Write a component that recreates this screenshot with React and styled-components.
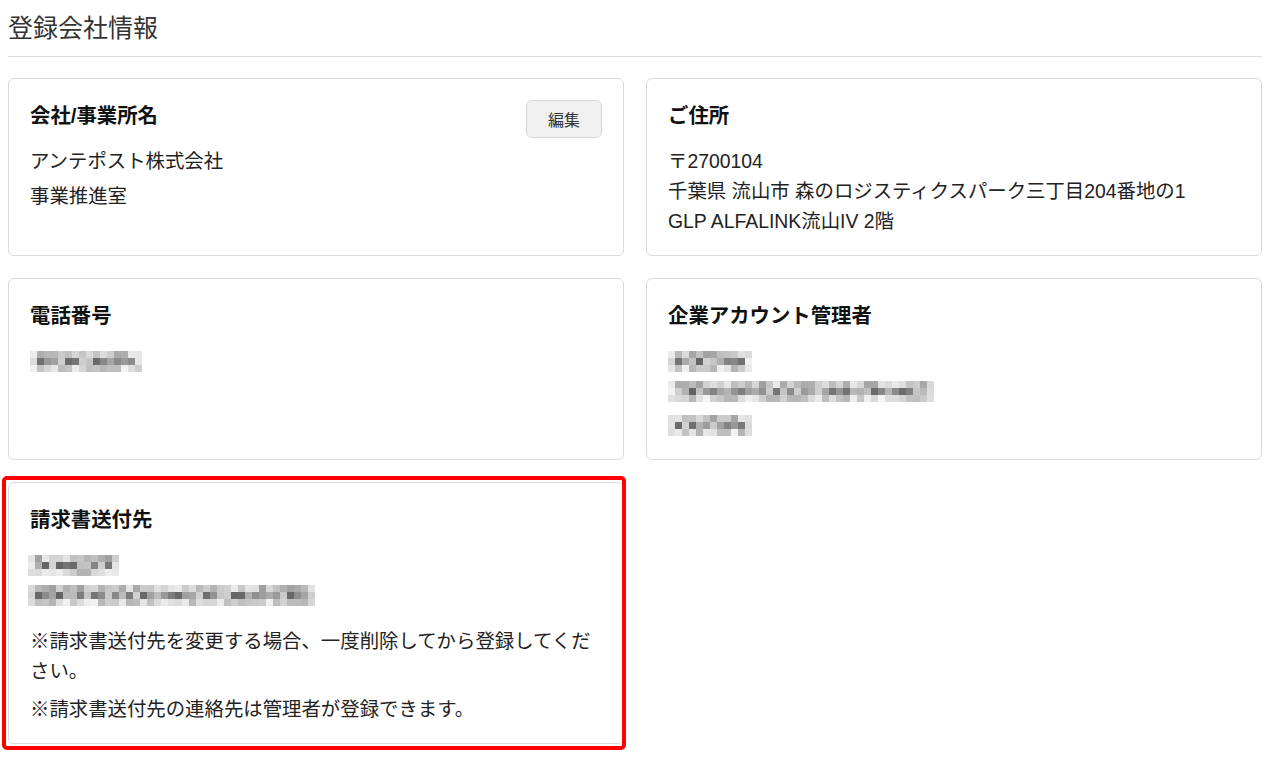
import styled, { createGlobalStyle } from "styled-components";

const GlobalStyle = createGlobalStyle`
    body {
        margin: 0;
        background: #fff;
        color: #222;
        font-family: "Liberation Sans", "Noto Sans CJK JP", sans-serif;
    }
`;

const Page = styled.div`
    min-height: 759px;
    box-sizing: border-box;
    padding: 10px 18px 20px 8px;
`;

const PageTitle = styled.h1`
    margin: 0;
    padding-bottom: 10px;
    border-bottom: 1px solid #dcdcdc;
    font-size: 25px;
    line-height: 36px;
    font-weight: normal;
    color: #333;
`;

const CardGrid = styled.div`
    display: grid;
    grid-template-columns: 1fr 1fr;
    gap: 22px;
    margin-top: 21px;
    align-items: stretch;
`;

const Card = styled.section`
    position: relative;
    border: 1px solid #dadada;
    border-radius: 6px;
    padding: 23px 21px 19px;
    background: #fff;
`;

const Highlight = styled.span`
    position: absolute;
    top: -7px;
    left: -7px;
    right: -3px;
    bottom: -7px;
    border: 4px solid #ff0000;
    border-radius: 5px;
    pointer-events: none;
`;

const CardHeader = styled.div`
    display: flex;
    justify-content: space-between;
    align-items: flex-start;
    margin-bottom: 16px;
`;

const CardTitle = styled.h2`
    margin: 0;
    font-size: 20.4px;
    line-height: 28px;
    font-weight: bold;
    color: #111;
`;

const EditButton = styled.button`
    width: 76px;
    height: 38px;
    margin: -2px 0 -8px;
    border: 1px solid #d8d8d8;
    border-radius: 6px;
    background: #f0f0f0;
    font-family: inherit;
    font-size: 16px;
    color: #333;
    cursor: pointer;
`;

const Line = styled.p`
    margin: ${(props) => (props.$gap ? `${props.$gap}px` : "0")} 0 0;
    font-size: 19.4px;
    line-height: 30px;
`;

const MosaicLine = styled.div`
    display: flex;
    align-items: center;
    height: 30px;
    margin-top: ${(props) => (props.$gap ? `${props.$gap}px` : "0")};
    margin-left: ${(props) => (props.$shift ? `${props.$shift}px` : "0")};
`;

const MosaicGrid = styled.div`
    display: grid;
    grid-template-columns: repeat(${(props) => props.$cols}, 7px);
    grid-template-rows: repeat(3, 7px);
`;

const Notes = styled.div`
    margin-top: 16px;
    display: flex;
    flex-direction: column;
    gap: 8px;
`;

const rand = (seed, i) => {
    const x = Math.sin(seed * 97.13 + i * 12.9898) * 43758.5453;
    return x - Math.floor(x);
};

// pixelated stand-in for the blurred personal data
const Mosaic = ({ width, seed, gap, shift }) => {
    const cols = Math.round(width / 7);
    const cells = [];
    for (let r = 0; r < 3; r++) {
        for (let c = 0; c < cols; c++) {
            const v = rand(seed, r * 50 + c);
            const edge = c === 0 || c === cols - 1;
            let light;
            if (r === 1) light = 0.38 + v * 0.45;
            else if (r === 0) light = 0.62 + v * 0.3;
            else light = 0.7 + v * 0.26;
            if (edge) light = 0.8 + v * 0.15;
            const g = Math.round(255 * light);
            cells.push(
                <span
                    key={`${r}-${c}`}
                    style={{ background: `rgb(${g}, ${g}, ${g})` }}
                />
            );
        }
    }
    return (
        <MosaicLine $gap={gap} $shift={shift}>
            <MosaicGrid $cols={cols}>{cells}</MosaicGrid>
        </MosaicLine>
    );
};

const App = () => {
    return (
        <Page>
            <GlobalStyle />
            <PageTitle>登録会社情報</PageTitle>

            <CardGrid>
                <Card>
                    <CardHeader>
                        <CardTitle>会社/事業所名</CardTitle>
                        <EditButton type="button">編集</EditButton>
                    </CardHeader>
                    <Line>アンテポスト株式会社</Line>
                    <Line $gap={5}>事業推進室</Line>
                </Card>

                <Card>
                    <CardHeader>
                        <CardTitle>ご住所</CardTitle>
                    </CardHeader>
                    <Line>〒2700104</Line>
                    <Line>千葉県 流山市 森のロジスティクスパーク三丁目204番地の1</Line>
                    <Line>GLP ALFALINK流山IV 2階</Line>
                </Card>

                <Card>
                    <CardHeader>
                        <CardTitle>電話番号</CardTitle>
                    </CardHeader>
                    <Mosaic width={112} seed={3} />
                </Card>

                <Card>
                    <CardHeader>
                        <CardTitle>企業アカウント管理者</CardTitle>
                    </CardHeader>
                    <Mosaic width={84} seed={7} />
                    <Mosaic width={266} seed={11} />
                    <Mosaic width={84} seed={13} gap={4} />
                </Card>

                <Card>
                    <Highlight />
                    <CardHeader>
                        <CardTitle>請求書送付先</CardTitle>
                    </CardHeader>
                    <Mosaic width={91} seed={17} shift={-2} />
                    <Mosaic width={287} seed={19} shift={-2} />
                    <Notes>
                        <Line>
                            ※請求書送付先を変更する場合、一度削除してから登録してください。
                        </Line>
                        <Line>※請求書送付先の連絡先は管理者が登録できます。</Line>
                    </Notes>
                </Card>
            </CardGrid>
        </Page>
    );
};

export default App;
